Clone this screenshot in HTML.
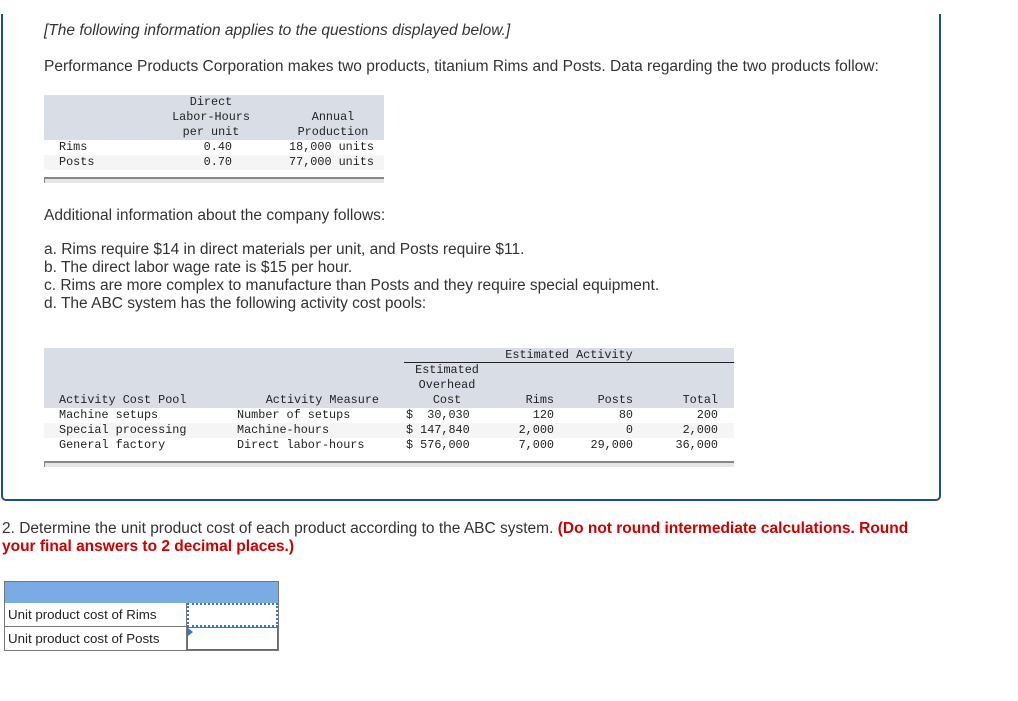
<!DOCTYPE html>
<html><head><meta charset="utf-8"><style>
*{margin:0;padding:0;box-sizing:border-box}
body{width:1018px;height:701px;background:#fff;position:relative;font-family:"Liberation Sans",sans-serif;color:#333;overflow:hidden}
.a{position:absolute;white-space:nowrap}
.t{font-size:15.5px;line-height:18px}
.m{font-family:"Liberation Mono",monospace;font-size:11.8px;line-height:15px;color:#222;position:absolute;white-space:nowrap}
.r{text-align:right}.c{text-align:center}
.bg{position:absolute;background:#d9dde6}
.alt{position:absolute;background:#f5f5f5}
.bar{position:absolute;background:#e6e6e6;border-top:2px solid #888;border-left:1px solid #888}
</style></head><body>
<div class="a" style="left:1px;top:14px;width:940px;height:487px;border:2px solid #1f4e8c;border-top:none;border-radius:0 0 5px 5px"></div>

<div class="a t" style="left:44px;top:22px;font-style:italic">[The following information applies to the questions displayed below.]</div>
<div class="a t" style="left:44px;top:58px">Performance Products Corporation makes two products, titanium Rims and Posts. Data regarding the two products follow:</div>

<div class="bg" style="left:44px;top:95px;width:340px;height:45px"></div>
<div class="alt" style="left:44px;top:155px;width:340px;height:15px"></div>
<div class="bar" style="left:44px;top:177px;width:340px;height:6px"></div>
<div class="m c" style="left:161px;top:95px;width:100px">Direct<br>Labor-Hours<br>per unit</div>
<div class="m c" style="left:283px;top:110px;width:100px">Annual<br>Production</div>
<div class="m" style="left:59px;top:140px">Rims<br>Posts</div>
<div class="m r" style="left:180px;top:140px;width:52px">0.40<br>0.70</div>
<div class="m r" style="left:270px;top:140px;width:104px">18,000 units<br>77,000 units</div>

<div class="a t" style="left:44px;top:207px">Additional information about the company follows:</div>
<div class="a t" style="left:44px;top:241px">a. Rims require $14 in direct materials per unit, and Posts require $11.<br>b. The direct labor wage rate is $15 per hour.<br>c. Rims are more complex to manufacture than Posts and they require special equipment.<br>d. The ABC system has the following activity cost pools:</div>

<div class="bg" style="left:44px;top:348px;width:690px;height:60px"></div>
<div class="alt" style="left:44px;top:423px;width:690px;height:15px"></div>
<div class="bar" style="left:44px;top:461px;width:690px;height:6px"></div>
<div class="m c" style="left:404px;top:348px;width:330px">Estimated Activity</div>
<div class="a" style="left:404px;top:362px;width:330px;height:1px;background:#222"></div>
<div class="m c" style="left:407px;top:363px;width:80px">Estimated<br>Overhead<br>Cost</div>
<div class="m" style="left:59px;top:393px">Activity Cost Pool<br>Machine setups<br>Special processing<br>General factory</div>
<div class="m r" style="left:230px;top:393px;width:149px">Activity Measure</div>
<div class="m" style="left:237px;top:408px">Number of setups<br>Machine-hours<br>Direct labor-hours</div>
<div class="m" style="left:406px;top:408px">$&nbsp;&nbsp;30,030<br>$ 147,840<br>$ 576,000</div>
<div class="m r" style="left:500px;top:393px;width:54px">Rims<br>120<br>2,000<br>7,000</div>
<div class="m r" style="left:580px;top:393px;width:53px">Posts<br>80<br>0<br>29,000</div>
<div class="m r" style="left:660px;top:393px;width:58px">Total<br>200<br>2,000<br>36,000</div>

<div class="a t" style="left:2px;top:520px">2. Determine the unit product cost of each product according to the ABC system. <b style="color:#c00">(Do not round intermediate calculations. Round</b></div>
<div class="a t" style="left:2px;top:538px;color:#c00;font-weight:bold">your final answers to 2 decimal places.)</div>

<div class="a" style="left:4px;top:581px;width:275px;height:70px;border:1px solid #777"></div>
<div class="a" style="left:5px;top:582px;width:273px;height:21px;background:#7aabe3"></div>
<div class="a" style="left:5px;top:626px;width:182px;height:1px;background:#777"></div>
<div class="a" style="left:186px;top:603px;width:1px;height:47px;background:#777"></div>
<div class="a" style="left:187px;top:603px;width:91px;height:24px;border:2px dotted #3a78c4"></div>
<div class="a" style="left:187px;top:627px;width:91px;height:23px;border:1px solid #4a6fa0"></div>
<div class="a" style="left:188px;top:628px;width:0;height:0;border-top:4px solid transparent;border-bottom:4px solid transparent;border-left:5px solid #3a78c4"></div>
<div class="a" style="left:8px;top:607px;font-size:13.3px;color:#222">Unit product cost of Rims</div>
<div class="a" style="left:8px;top:631px;font-size:13.3px;color:#222">Unit product cost of Posts</div>
</body></html>
